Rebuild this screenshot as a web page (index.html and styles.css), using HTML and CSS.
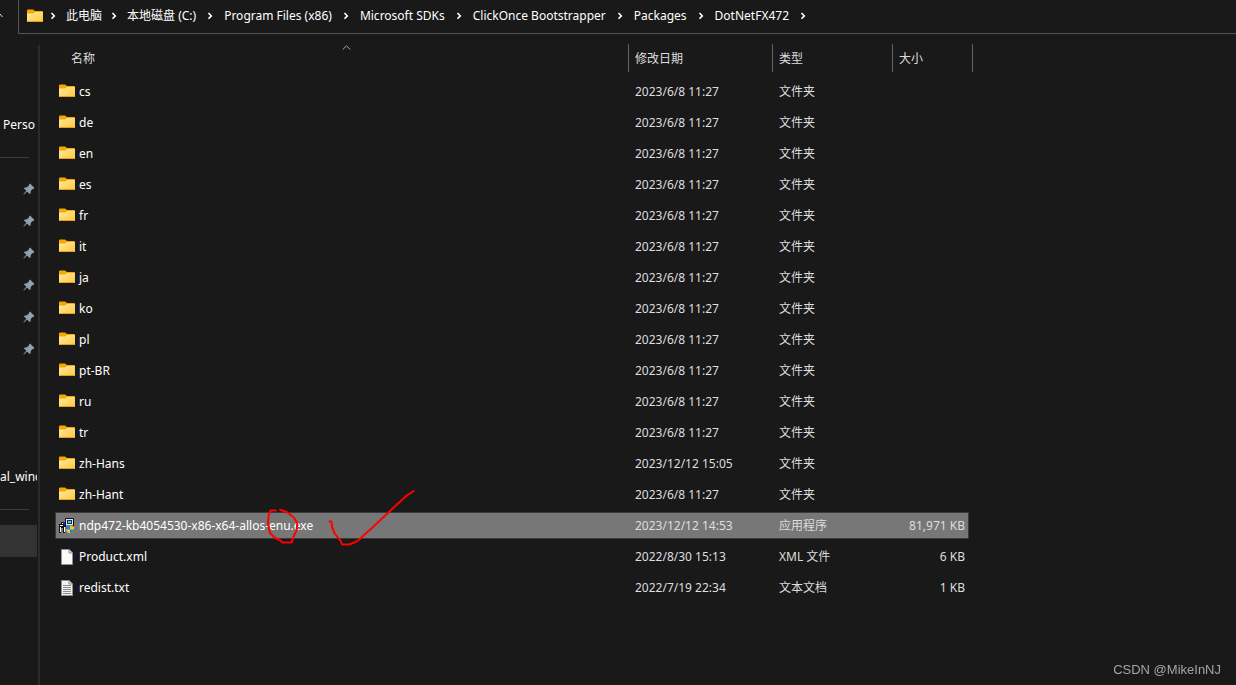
FILE: index.html
```
<!DOCTYPE html>
<html lang="zh-CN">
<head>
<meta charset="utf-8">
<title>DotNetFX472</title>
<link rel="stylesheet" href="styles.css">
</head>
<body>
<svg class="defs" aria-hidden="true">
  <defs>
    <linearGradient id="folder-front" x1="0" y1="0" x2="1" y2="1">
      <stop offset="0" stop-color="#ffe9a2"/><stop offset="1" stop-color="#ffc83d"/>
    </linearGradient>
    <symbol id="folder" viewBox="0 0 16 14">
      <path d="M0 1.5Q0 .5 1 .5H6L8 2H15Q16 2 16 3V12H0Z" fill="#f5a800"/>
      <path d="M0 4.500H6L8 3H15.500L16 3.500V12.500Q16 13 15.500 13H.5Q0 13 0 12.500Z" fill="url(#folder-front)"/>
      <path d="M.5 12.500H15.500" stroke="#e0a020" stroke-width="1"/>
    </symbol>
    <symbol id="chevron" viewBox="0 0 6 8">
      <path d="M1.500 1 4.300 3.900 1.500 6.800" fill="none" stroke="#fff" stroke-width="1.600"/>
    </symbol>
    <symbol id="pin" viewBox="0 0 12 12">
      <path d="M7 .6 11.400 5 10.600 6 9.600 6.100 7.700 8 7.500 10.200 6.500 10.900 4.100 8.500 .9 11.400 .4 10.900 3.400 7.800 1 5.400 1.700 4.400 4 4.200 5.900 2.400 6 1.400Z" fill="#93a1aa"/>
    </symbol>
    <symbol id="page" viewBox="0 0 12 16">
      <path d="M.5.5H8L11.500 4V15.500H.5Z" fill="#fafafa" stroke="#909090"/>
      <path d="M8 .5V4H11.500" fill="#ddd" stroke="#909090"/>
    </symbol>
    <symbol id="text-page" viewBox="0 0 12 16">
      <path d="M.5.5H8L11.500 4V15.500H.5Z" fill="#f2f2f2" stroke="#909090"/>
      <path d="M8 .5V4H11.500" fill="#ddd" stroke="#909090"/>
      <path d="M2 5.500H10M2 7.500H10M2 9.500H10M2 11.500H10M2 13.500H10" stroke="#8d8d8d"/>
    </symbol>
    <symbol id="installer" viewBox="0 0 16 16">
      <path d="M6.500.5H14.500V8H6.500Z" fill="#e6e6e6" stroke="#111"/>
      <path d="M8 2H13V6H8Z" fill="#0b2a8c"/><path d="M9 3H12V5H9Z" fill="#42d6c8"/>
      <path d="M0 6H2V4H6V6L7 7V9H6V15H4V10H2V15H0Z" fill="#111"/>
      <path d="M1 7H4V8H1ZM1 9H2V14H1ZM5 9H6V14H5ZM3 5H4V6H3Z" fill="#fff"/>
      <path d="M4 4H6V8H5V6H4Z" fill="#1b20c8"/>
      <path d="M7 8.500Q9.500 8.500 11 7.300Q12.500 8.500 15 8.500V11Q15 14 11 15.600Q7 14 7 11Z" fill="#ffc91f"/>
      <path d="M11 7.300V11.500H7V8.500Q9.500 8.500 11 7.300ZM11 11.500H15Q15 14 11 15.600Z" fill="#1787dc"/>
    </symbol>
  </defs>
</svg>

<header class="topbar">
  <button class="recent" type="button" aria-label="Up"><svg width="4" height="5" viewBox="0 0 4 5"><path d="M-2 4 0 1 2.500 4" fill="none" stroke="#ddd"/></svg></button>
  <nav class="address" aria-label="Address">
    <svg class="icon-folder"><use href="#folder"/></svg>
    <svg class="icon-chevron first"><use href="#chevron"/></svg>
    <a href="#">此电脑</a><svg class="icon-chevron"><use href="#chevron"/></svg>
    <a href="#">本地磁盘 (C:)</a><svg class="icon-chevron spaced"><use href="#chevron"/></svg>
    <a href="#">Program Files (x86)</a><svg class="icon-chevron spaced"><use href="#chevron"/></svg>
    <a href="#">Microsoft SDKs</a><svg class="icon-chevron spaced"><use href="#chevron"/></svg>
    <a href="#">ClickOnce Bootstrapper</a><svg class="icon-chevron spaced"><use href="#chevron"/></svg>
    <a href="#">Packages</a><svg class="icon-chevron spaced"><use href="#chevron"/></svg>
    <a href="#">DotNetFX472</a><svg class="icon-chevron spaced"><use href="#chevron"/></svg>
  </nav>
</header>

<div class="body">
  <aside class="sidebar">
    <div class="side-item side-label">Perso</div>
    <div class="side-item"><hr></div>
    <div class="side-item pinned"><svg class="icon-pin"><use href="#pin"/></svg></div>
    <div class="side-item pinned"><svg class="icon-pin"><use href="#pin"/></svg></div>
    <div class="side-item pinned"><svg class="icon-pin"><use href="#pin"/></svg></div>
    <div class="side-item pinned"><svg class="icon-pin"><use href="#pin"/></svg></div>
    <div class="side-item pinned"><svg class="icon-pin"><use href="#pin"/></svg></div>
    <div class="side-item pinned"><svg class="icon-pin"><use href="#pin"/></svg></div>
    <div class="side-item"></div>
    <div class="side-item"></div>
    <div class="side-item"></div>
    <div class="side-item">al_winc</div>
    <div class="side-item"><hr></div>
    <div class="side-item current"></div>
  </aside>

  <main class="content">
    <table class="files">
      <colgroup><col class="col-name"><col class="col-date"><col class="col-type"><col class="col-size"><col class="col-end"></colgroup>
      <thead>
        <tr>
          <th class="head-name"><div class="head">名称<svg class="sort" viewBox="0 0 9 5"><path d="M.7 4.500 4.500 .9 8.300 4.500" fill="none" stroke="#aaa"/></svg></div></th>
          <th><div class="head ruled">修改日期</div></th>
          <th><div class="head ruled">类型</div></th>
          <th colspan="2"><div class="head ruled last">大小</div></th>
        </tr>
      </thead>
      <tbody>
        <tr><td><div class="name"><svg class="icon-folder"><use href="#folder"/></svg>cs</div></td><td>2023/6/8 11:27</td><td>文件夹</td><td></td></tr>
        <tr><td><div class="name"><svg class="icon-folder"><use href="#folder"/></svg>de</div></td><td>2023/6/8 11:27</td><td>文件夹</td><td></td></tr>
        <tr><td><div class="name"><svg class="icon-folder"><use href="#folder"/></svg>en</div></td><td>2023/6/8 11:27</td><td>文件夹</td><td></td></tr>
        <tr><td><div class="name"><svg class="icon-folder"><use href="#folder"/></svg>es</div></td><td>2023/6/8 11:27</td><td>文件夹</td><td></td></tr>
        <tr><td><div class="name"><svg class="icon-folder"><use href="#folder"/></svg>fr</div></td><td>2023/6/8 11:27</td><td>文件夹</td><td></td></tr>
        <tr><td><div class="name"><svg class="icon-folder"><use href="#folder"/></svg>it</div></td><td>2023/6/8 11:27</td><td>文件夹</td><td></td></tr>
        <tr><td><div class="name"><svg class="icon-folder"><use href="#folder"/></svg>ja</div></td><td>2023/6/8 11:27</td><td>文件夹</td><td></td></tr>
        <tr><td><div class="name"><svg class="icon-folder"><use href="#folder"/></svg>ko</div></td><td>2023/6/8 11:27</td><td>文件夹</td><td></td></tr>
        <tr><td><div class="name"><svg class="icon-folder"><use href="#folder"/></svg>pl</div></td><td>2023/6/8 11:27</td><td>文件夹</td><td></td></tr>
        <tr><td><div class="name"><svg class="icon-folder"><use href="#folder"/></svg>pt-BR</div></td><td>2023/6/8 11:27</td><td>文件夹</td><td></td></tr>
        <tr><td><div class="name"><svg class="icon-folder"><use href="#folder"/></svg>ru</div></td><td>2023/6/8 11:27</td><td>文件夹</td><td></td></tr>
        <tr><td><div class="name"><svg class="icon-folder"><use href="#folder"/></svg>tr</div></td><td>2023/6/8 11:27</td><td>文件夹</td><td></td></tr>
        <tr><td><div class="name"><svg class="icon-folder"><use href="#folder"/></svg>zh-Hans</div></td><td>2023/12/12 15:05</td><td>文件夹</td><td></td></tr>
        <tr><td><div class="name"><svg class="icon-folder"><use href="#folder"/></svg>zh-Hant</div></td><td>2023/6/8 11:27</td><td>文件夹</td><td></td></tr>
        <tr class="selected">
          <td><div class="name"><svg class="icon-app"><use href="#installer"/></svg>ndp472-kb4054530-x86-x64-allos-enu.exe
            <svg class="marks" viewBox="265 488 152 60" aria-hidden="true">
              <path d="M276 510.500H270.500L268.700 515 268 523 270 533 275 538 280 540 282 542.500H291.700L293.300 537 296.700 530 297.300 523 293.300 517 286.700 512 280 509.700"/>
              <path d="M329.500 521.500H331.500L332 527 334.700 533.500 340.700 541 342 544.500H349.500L357.500 541 373 527 390 511 406.700 495.500 413.700 491"/>
            </svg></div></td>
          <td>2023/12/12 14:53</td><td>应用程序</td><td class="size">81,971 KB</td></tr>
        <tr><td><div class="name"><svg class="icon-page"><use href="#page"/></svg>Product.xml</div></td><td>2022/8/30 15:13</td><td>XML 文件</td><td class="size">6 KB</td></tr>
        <tr><td><div class="name"><svg class="icon-page"><use href="#text-page"/></svg>redist.txt</div></td><td>2022/7/19 22:34</td><td>文本文档</td><td class="size">1 KB</td></tr>
      </tbody>
    </table>
  </main>
</div>
<div class="watermark">CSDN @MikeInNJ</div>
</body>
</html>
```
FILE: styles.css
```
* { box-sizing: border-box; }
body {
  margin: 0;
  min-height: 100vh;
  display: flex;
  flex-direction: column;
  background: #191919;
  color: #fff;
  font: 12px/16px "Noto Sans", "Noto Sans CJK SC", sans-serif;
}
svg { display: block; flex: none; }
.defs { position: absolute; width: 0; height: 0; }

.topbar { display: flex; height: 34px; }
.recent {
  width: 18px;
  padding: 13px 0 0;
  border: 0;
  background: none;
  display: flex;
  align-items: flex-start;
}
.address {
  flex: 1;
  display: flex;
  align-items: center;
  padding: 0 0 2px 8px;
  border: solid #535353;
  border-width: 0 0 1px 1px;
  white-space: nowrap;
}
.address a { color: #fff; text-decoration: none; }
.icon-folder { width: 16px; height: 14px; }
.icon-chevron { width: 6px; height: 8px; margin: 0 10px 0 9px; }
.icon-chevron.first { margin-left: 7px; }
.icon-chevron.spaced { margin: 0 11px; }

.body { flex: 1; display: flex; }
.sidebar {
  width: 40px;
  margin-top: 11px;
  padding-top: 64px;
  border-right: 2px solid #2b2b2b;
}
.side-item {
  height: 32px;
  width: 37px;
  display: flex;
  align-items: center;
  overflow: hidden;
  white-space: nowrap;
}
.side-label { padding-left: 3px; }
.pinned { justify-content: flex-end; padding-right: 2px; }
.icon-pin { width: 12px; height: 12px; }
.side-item hr { width: 29px; margin: 0; border: 0; border-top: 1px solid #3d3d3d; }
.current { background: #333; }

.content { flex: 1; padding: 6px 0 0 15px; }
.files {
  width: 918px;
  table-layout: fixed;
  border-collapse: separate;
  border-spacing: 0 4px;
  color: #dedede;
}
.col-name { width: 573px; }
.col-date { width: 144px; }
.col-type { width: 120px; }
.col-size { width: 77px; }
.col-end { width: 4px; }
th {
  height: 30px;
  padding: 0;
  vertical-align: top;
  text-align: left;
  font-weight: 400;
}
.head { position: relative; height: 28px; padding-top: 2px; display: flex; align-items: center; }
.head-name .head { padding-left: 16px; }
.ruled { padding-left: 6px; border-left: 1px solid #636363; }
.last { border-right: 1px solid #636363; }
.sort { position: absolute; top: 1px; left: 50%; width: 9px; height: 5px; }
td { height: 27px; padding: 0 0 0 7px; }
td:first-child { padding-left: 4px; color: #fff; }
td.size { text-align: right; padding-right: 4px; }
.name { position: relative; display: flex; align-items: center; gap: 4px; }
.name .icon-folder { margin-bottom: 2px; }
.icon-app { width: 16px; height: 16px; }
.icon-page { width: 12px; height: 16px; margin: 0 2px; }
.selected td { background: #777; border: solid #3a3a3a; border-width: 1px 0; }
.selected td:first-child { border-left-width: 1px; padding-left: 3px; }
.selected td.size { border-right-width: 1px; padding-right: 3px; }
.marks {
  position: absolute;
  left: 206px;
  top: -30px;
  width: 152px;
  height: 60px;
  fill: none;
  stroke: #f00;
  stroke-width: 2;
  stroke-linejoin: round;
  stroke-linecap: round;
}
.watermark {
  position: fixed;
  right: 15px;
  bottom: 7px;
  color: #a4a4a4;
  font: 13px/16px "Liberation Sans", sans-serif;
}
```
